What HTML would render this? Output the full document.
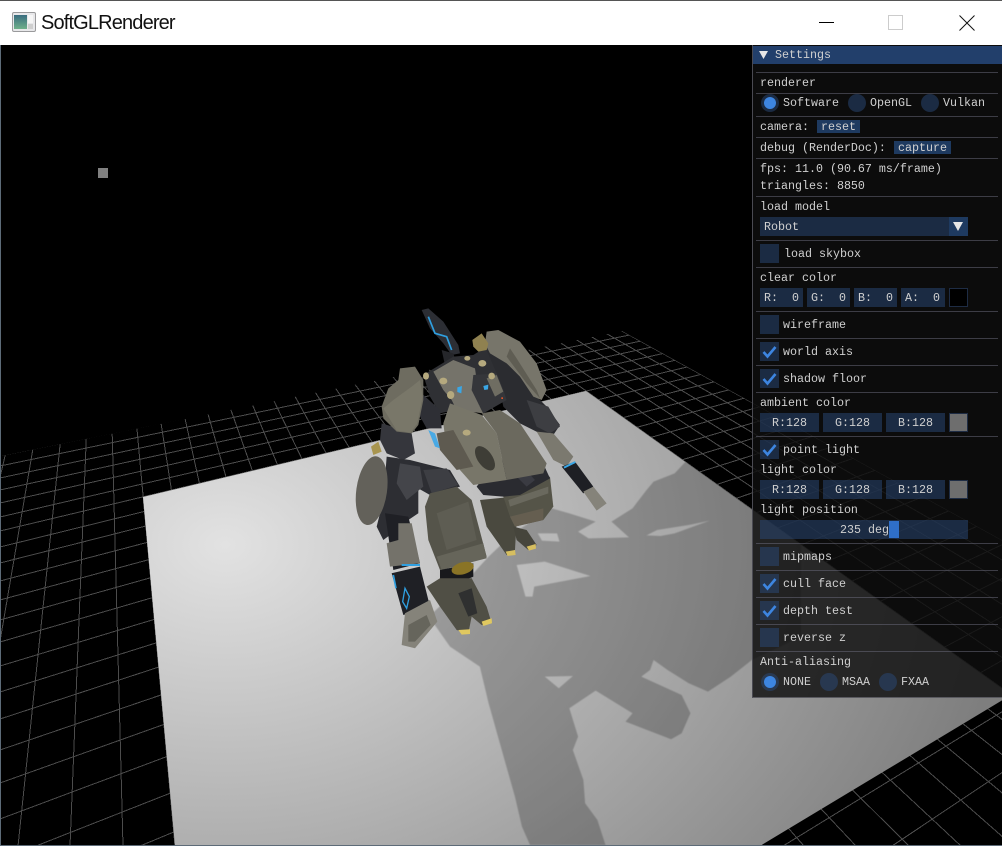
<!DOCTYPE html>
<html><head><meta charset="utf-8"><title>SoftGLRenderer</title>
<style>
html,body{margin:0;padding:0;background:#000;width:1002px;height:846px;overflow:hidden}
#w{position:relative;width:1002px;height:846px;overflow:hidden;background:#000;font-family:"Liberation Mono",monospace}
#tb{position:absolute;left:0;top:0;width:1002px;height:45px;background:#fff;border-top:1px solid #555;box-sizing:border-box}
#title{position:absolute;left:41px;top:12px;font:20px/22px "Liberation Sans",sans-serif;letter-spacing:-.85px;color:#111}
#sc{position:absolute;left:0;top:0;display:block}
#p{position:absolute;left:752px;top:45px;width:250px;height:653px;background:rgba(15,15,15,.82);border-left:1px solid #4a4a52;border-bottom:1px solid #5a5a60;box-sizing:border-box}
.a{position:absolute}
.t{position:absolute;font:11.67px/14px "Liberation Mono",monospace;color:#d0d0d0;white-space:pre}
.s{position:absolute;left:756px;width:242px;height:1px;background:rgba(110,110,128,.5)}
.f{position:absolute;background:rgba(41,74,122,.5)}
.b{position:absolute;background:#1e3a60}
.c{position:absolute;left:760px;width:19px;height:19px;background:rgba(41,74,122,.5)}
.c svg{position:absolute;left:0;top:0}
.r{position:absolute;width:18px;height:18px;border-radius:50%;background:rgba(41,74,122,.5)}
.r i{position:absolute;left:3px;top:3px;width:12px;height:12px;border-radius:50%;background:#3d85e0}
.sw{position:absolute;left:949px;width:19px;height:19px;box-sizing:border-box;border:1px solid #1e2c44}
</style></head><body><div id="w">
<svg id="sc" width="1002" height="846" viewBox="0 0 1002 846" xmlns="http://www.w3.org/2000/svg">
<defs>
<clipPath id="gc"><polygon points="-400,537 622,331 1558,846 -400,846"/></clipPath>
<clipPath id="fc"><polygon points="143,497 586,391 1011,695 760,846 175,846"/></clipPath>
<radialGradient id="fg" gradientUnits="userSpaceOnUse" cx="0" cy="0" r="1" gradientTransform="translate(225 545) scale(787 588)">
<stop offset="0" stop-color="#e2e2e2"/><stop offset="1" stop-color="#7e7e7e"/></radialGradient>
<filter id="bl" x="-10%" y="-10%" width="120%" height="120%"><feGaussianBlur stdDeviation="1.2"/></filter>
</defs>
<rect width="1002" height="846" fill="#000"/>
<rect x="98" y="168" width="10" height="10" fill="#808080"/>
<g clip-path="url(#gc)" stroke="#4c4c4c" stroke-width="1" shape-rendering="crispEdges">
<line x1="102" y1="45" x2="-139" y2="846"/><line x1="102" y1="45" x2="-87" y2="846"/><line x1="102" y1="45" x2="-35" y2="846"/><line x1="102" y1="45" x2="18" y2="846"/><line x1="102" y1="45" x2="70" y2="846"/><line x1="102" y1="45" x2="123" y2="846"/>
<line x1="102" y1="45" x2="175" y2="846"/><line x1="102" y1="45" x2="227" y2="846"/><line x1="102" y1="45" x2="280" y2="846"/><line x1="102" y1="45" x2="332" y2="846"/><line x1="102" y1="45" x2="385" y2="846"/><line x1="102" y1="45" x2="437" y2="846"/><line x1="102" y1="45" x2="489" y2="846"/><line x1="102" y1="45" x2="542" y2="846"/><line x1="102" y1="45" x2="594" y2="846"/><line x1="102" y1="45" x2="647" y2="846"/><line x1="102" y1="45" x2="699" y2="846"/><line x1="102" y1="45" x2="751" y2="846"/><line x1="102" y1="45" x2="804" y2="846"/><line x1="102" y1="45" x2="856" y2="846"/><line x1="102" y1="45" x2="909" y2="846"/><line x1="102" y1="45" x2="961" y2="846"/><line x1="102" y1="45" x2="1013" y2="846"/><line x1="102" y1="45" x2="1066" y2="846"/><line x1="102" y1="45" x2="1118" y2="846"/><line x1="102" y1="45" x2="1171" y2="846"/><line x1="102" y1="45" x2="1223" y2="846"/><line x1="102" y1="45" x2="1279" y2="846"/><line x1="102" y1="45" x2="1335" y2="846"/><line x1="102" y1="45" x2="1391" y2="846"/><line x1="102" y1="45" x2="1446" y2="846"/><line x1="102" y1="45" x2="1502" y2="846"/><line x1="102" y1="45" x2="1558" y2="846"/>
<line x1="0" y1="456" x2="2124" y2="24"/><line x1="0" y1="466" x2="2124" y2="24"/><line x1="0" y1="478" x2="2124" y2="24"/><line x1="0" y1="490" x2="2124" y2="24"/><line x1="0" y1="503" x2="2124" y2="24"/><line x1="0" y1="517" x2="2124" y2="24"/><line x1="0" y1="531" x2="2124" y2="24"/><line x1="0" y1="547" x2="2124" y2="24"/><line x1="0" y1="563" x2="2124" y2="24"/><line x1="0" y1="581" x2="2124" y2="24"/><line x1="0" y1="600" x2="2124" y2="24"/><line x1="0" y1="620" x2="2124" y2="24"/><line x1="0" y1="642" x2="2124" y2="24"/><line x1="0" y1="666" x2="2124" y2="24"/><line x1="0" y1="692" x2="2124" y2="24"/><line x1="0" y1="719" x2="2124" y2="24"/><line x1="0" y1="750" x2="2124" y2="24"/><line x1="0" y1="783" x2="2124" y2="24"/><line x1="0" y1="819" x2="2124" y2="24"/>
<line x1="36" y1="846" x2="2124" y2="24"/><line x1="140" y1="846" x2="2124" y2="24"/><line x1="247" y1="846" x2="2124" y2="24"/><line x1="353" y1="846" x2="2124" y2="24"/><line x1="461" y1="846" x2="2124" y2="24"/><line x1="568" y1="846" x2="2124" y2="24"/><line x1="675" y1="846" x2="2124" y2="24"/><line x1="783" y1="846" x2="2124" y2="24"/><line x1="892" y1="846" x2="2124" y2="24"/>
</g>
<polygon points="143,497 586,391 1011,695 760,846 175,846" fill="url(#fg)"/>
<g clip-path="url(#fc)"><g transform="translate(450 450) scale(.351 .3333)">
<path filter="url(#bl)" fill="#000" fill-opacity=".22" fill-rule="evenodd" d="M290,175 L340,190 415,215 365,245 395,265 510,262 460,215 520,175 560,120 580,95 640,70 680,25 640,-20 1000,150 1000,560 860,630 800,680 735,725 680,700 620,660 580,630 570,660 545,680 660,735 685,790 660,850 630,868 500,815 520,790 415,722 340,775 365,860 350,900 380,990 385,1060 420,1110 443,1185 228,1185 205,1130 185,1040 150,910 110,760 85,650 0,590 -60,500 40,400 110,320 180,250 Z M590,240 L680,225 740,212 640,250 600,258 560,256 Z M190,345 L270,335 400,378 240,410 235,440 215,440 Z M270,680 L350,678 310,715 Z M250,250 L305,250 312,275 262,272 Z"/>
</g></g>
<g transform="translate(340 300) scale(.3333)">
<polygon points="245,30 265,25 310,65 355,135 360,160 335,165 310,130 270,85" fill="#2c2e34"/>
<polyline points="265,50 285,100 320,110 335,150" fill="none" stroke="#2f9fe0" stroke-width="5"/>
<polygon points="305,150 340,160 350,195 315,195" fill="#25262a"/>
<polygon points="250,225 340,170 400,165 440,140 510,220 470,300 300,340 270,290" fill="#2f3034"/>
<polygon points="470,220 440,150 500,170 570,270 620,320 660,375 640,405 600,400 540,370 490,320" fill="#2b2c30"/>
<polygon points="440,95 475,90 540,125 590,190 620,270 605,300 580,290 540,230 500,190 450,160 435,130" fill="#77756a"/>
<polygon points="510,145 530,175 590,270 600,295 560,250 500,170" fill="#5f5d53"/>
<polygon points="397,120 425,100 445,130 440,150 415,155 400,140" fill="#8f8150"/>
<polygon points="560,300 625,320 660,380 630,400 590,380" fill="#3d3e42"/>
<polygon points="590,395 640,400 700,470 680,500 640,480" fill="#7b796f"/>
<polygon points="665,500 705,485 760,560 730,580" fill="#1e1f24"/>
<polyline points="672,503 706,486" fill="none" stroke="#3aa7e6" stroke-width="6"/>
<polygon points="730,575 760,560 800,610 770,632" fill="#85837a"/>
<polygon points="125,370 175,385 215,400 225,460 190,480 140,460 120,420" fill="#35363c"/>
<polygon points="245,280 300,330 305,385 260,385 235,340" fill="#2e2f35"/>
<polygon points="180,205 225,200 250,240 250,300 235,375 215,400 170,395 130,355 125,320 145,265 175,240" fill="#6e6c60"/>
<polygon points="130,325 160,300 215,260 240,240 248,290 232,370 212,398 170,392" fill="#797769"/>
<polygon points="420,600 520,590 530,660 525,750 500,765 440,680" fill="#4a493f"/>
<polygon points="520,680 560,690 590,735 565,750 530,720" fill="#46453c"/>
<polygon points="497,755 525,750 527,765 503,768" fill="#d6be60"/>
<polygon points="560,740 587,732 588,746 567,752" fill="#d6be60"/>
<polygon points="490,590 630,530 640,620 610,660 525,680 510,650" fill="#555448"/>
<polygon points="505,600 625,560 625,580 510,620" fill="#6a695e"/>
<polygon points="510,650 610,625 610,660 525,680" fill="#655e50"/>
<polygon points="470,480 600,470 630,535 540,585 490,590 430,585 410,560" fill="#2a2b30"/>
<polygon points="500,500 530,480 585,540 560,560" fill="#3a3b42"/>
<polygon points="140,470 210,480 250,490 330,510 360,560 270,585 235,565 235,640 205,660 170,690 130,720 110,680 130,600" fill="#2d2e33"/>
<polygon points="180,490 240,500 250,560 200,600 170,550" fill="#44454a"/>
<polygon points="250,510 320,505 355,555 275,580" fill="#3d3e43"/>
<ellipse cx="95" cy="572" rx="46" ry="104" transform="rotate(8 95 572)" fill="#63615a"/>
<polygon points="93,440 115,425 125,455 100,465" fill="#a8954f"/>
<polygon points="135,640 205,650 240,790 160,810" fill="#1f2025"/>
<polygon points="175,670 215,670 240,790 150,800 140,730 175,720" fill="#74726a"/>
<polyline points="185,795 240,795" fill="none" stroke="#2f9fe0" stroke-width="6"/>
<polygon points="155,820 240,800 270,920 190,945" fill="#1f2025"/>
<polyline points="160,825 168,865" fill="none" stroke="#2f9fe0" stroke-width="5"/>
<polygon points="195,865 188,905 200,925 208,890" fill="none" stroke="#2f9fe0" stroke-width="4"/>
<polygon points="195,940 270,900 292,965 225,1045 185,1035" fill="#85837a"/>
<polygon points="205,975 260,945 272,975 225,1025 205,1025" fill="#66655c"/>
<polygon points="255,620 270,580 350,560 395,600 440,770 300,810 265,720" fill="#55544a"/>
<polygon points="290,640 385,605 410,720 320,750" fill="#5e5d53"/>
<polygon points="290,770 430,730 440,775 305,810" fill="#66655a"/>
<polygon points="300,810 400,790 400,830 330,860 300,850" fill="#18191c"/>
<ellipse cx="368" cy="805" rx="34" ry="18" transform="rotate(-15 368 805)" fill="#8a7426"/>
<polygon points="260,860 300,835 395,835 440,920 455,970 425,975 395,950 385,1000 350,990 300,920" fill="#504f45"/>
<polygon points="355,880 395,865 412,940 385,950" fill="#2f3030"/>
<polygon points="355,990 390,988 390,1002 365,1004" fill="#e0c860"/>
<polygon points="425,965 455,955 456,970 430,978" fill="#e0c860"/>
<polygon points="280,215 340,180 405,205 410,240 395,270 430,340 350,330 335,300 310,270" fill="#75736a"/>
<polygon points="330,310 425,345 470,400 500,540 400,555 360,510 320,450 310,370" fill="#787669"/>
<polygon points="425,340 480,330 540,370 620,490 610,520 500,540 470,400" fill="#6b695e"/>
<polygon points="400,225 470,220 490,270 500,300 430,340 395,270" fill="#35363a"/>
<polygon points="440,235 470,225 490,275 465,290" fill="#6f6d62"/>
<polygon points="290,400 340,390 400,500 350,510 300,450" fill="#5e5a50"/>
<ellipse cx="435" cy="475" rx="22" ry="42" transform="rotate(-35 435 475)" fill="#3e3d36"/>
<polygon points="265,390 285,400 300,445 285,440" fill="#49a9e4"/>
<polygon points="352,262 366,258 364,280 352,276" fill="#3aa7e6"/>
<polygon points="430,258 445,254 444,268 433,270" fill="#3aa7e6"/>
<g fill="#b5a97e"><ellipse cx="310" cy="243" rx="12" ry="10"/><ellipse cx="332" cy="285" rx="11" ry="12"/><ellipse cx="258" cy="228" rx="9" ry="11"/><ellipse cx="380" cy="398" rx="12" ry="9"/><ellipse cx="427" cy="190" rx="12" ry="10"/><ellipse cx="455" cy="228" rx="10" ry="10"/><ellipse cx="382" cy="175" rx="9" ry="7"/></g>
<rect x="484" y="292" width="5" height="5" fill="#e0552a"/>
</g>
</svg>

<div id="tb"></div>
<svg class="a" style="left:12px;top:12px" width="24" height="20"><rect x=".5" y=".5" width="23" height="19" rx="1.5" fill="#e8e8ea" stroke="#9a9a9c"/><defs><linearGradient id="ic" x1="0" y1="0" x2="0" y2="1"><stop offset="0" stop-color="#3a6d80"/><stop offset="1" stop-color="#6fb08a"/></linearGradient></defs><rect x="2" y="3" width="13" height="14" fill="url(#ic)"/><rect x="16" y="3" width="5" height="8" fill="#f6f6f6"/><rect x="16" y="12" width="5" height="5" fill="#cfcfcf"/></svg>
<div id="title">SoftGLRenderer</div>
<svg class="a" style="left:810px;top:10px" width="180" height="26"><line x1="9" y1="12.5" x2="24" y2="12.5" stroke="#000"/><rect x="78.5" y="5.5" width="14" height="14" fill="none" stroke="#ccc"/><path d="M149.5 5.5 L164.5 20.5 M164.5 5.5 L149.5 20.5" stroke="#111" fill="none"/></svg>

<div id="p"></div>
<div class="a" style="left:753px;top:46px;width:249px;height:18px;background:#223f6b"></div>
<svg class="a" style="left:759px;top:50px" width="10" height="10"><polygon points="0,1 9,1 4.5,9" fill="#e6e6e6"/></svg>
<div class="t" style="left:775px;top:48px">Settings</div>

<div class="s" style="top:72px"></div>
<div class="t" style="left:760px;top:76px">renderer</div>
<div class="s" style="top:93px"></div>
<div class="r" style="left:761px;top:94px"><i></i></div><div class="t" style="left:783px;top:96px">Software</div>
<div class="r" style="left:848px;top:94px"></div><div class="t" style="left:870px;top:96px">OpenGL</div>
<div class="r" style="left:921px;top:94px"></div><div class="t" style="left:943px;top:96px">Vulkan</div>
<div class="s" style="top:116px"></div>
<div class="t" style="left:760px;top:120px">camera:</div>
<div class="b" style="left:817px;top:120px;width:43px;height:13px"></div><div class="t" style="left:821px;top:120px">reset</div>
<div class="s" style="top:137px"></div>
<div class="t" style="left:760px;top:141px">debug (RenderDoc):</div>
<div class="b" style="left:894px;top:141px;width:57px;height:13px"></div><div class="t" style="left:898px;top:141px">capture</div>
<div class="s" style="top:158px"></div>
<div class="t" style="left:760px;top:162px">fps: 11.0 (90.67 ms/frame)</div>
<div class="t" style="left:760px;top:179px">triangles: 8850</div>
<div class="s" style="top:196px"></div>
<div class="t" style="left:760px;top:200px">load model</div>
<div class="f" style="left:760px;top:217px;width:189px;height:19px"></div>
<div class="b" style="left:949px;top:217px;width:19px;height:19px"></div>
<svg class="a" style="left:953px;top:222px" width="11" height="10"><polygon points="0,0 10,0 5,9" fill="#e6e6e6"/></svg>
<div class="t" style="left:764px;top:220px">Robot</div>
<div class="s" style="top:240px"></div>
<div class="c" style="top:244px"></div><div class="t" style="left:784px;top:247px">load skybox</div>
<div class="s" style="top:267px"></div>
<div class="t" style="left:760px;top:271px">clear color</div>
<div class="f" style="left:760px;top:288px;width:43px;height:19px"></div><div class="t" style="left:764px;top:291px">R:  0</div>
<div class="f" style="left:807px;top:288px;width:43px;height:19px"></div><div class="t" style="left:811px;top:291px">G:  0</div>
<div class="f" style="left:854px;top:288px;width:43px;height:19px"></div><div class="t" style="left:858px;top:291px">B:  0</div>
<div class="f" style="left:901px;top:288px;width:44px;height:19px"></div><div class="t" style="left:905px;top:291px">A:  0</div>
<div class="sw" style="top:288px;background:#000"></div>
<div class="s" style="top:311px"></div>
<div class="c" style="top:315px"></div><div class="t" style="left:783px;top:318px">wireframe</div>
<div class="s" style="top:338px"></div>
<div class="c" style="top:342px"><svg width="19" height="19"><polyline points="3.5,10 7.5,14.5 15.5,5" fill="none" stroke="#3d85e0" stroke-width="2.6"/></svg></div><div class="t" style="left:783px;top:345px">world axis</div>
<div class="s" style="top:365px"></div>
<div class="c" style="top:369px"><svg width="19" height="19"><polyline points="3.5,10 7.5,14.5 15.5,5" fill="none" stroke="#3d85e0" stroke-width="2.6"/></svg></div><div class="t" style="left:783px;top:372px">shadow floor</div>
<div class="s" style="top:392px"></div>
<div class="t" style="left:760px;top:396px">ambient color</div>
<div class="f" style="left:760px;top:413px;width:59px;height:19px"></div><div class="t" style="left:772px;top:416px">R:128</div>
<div class="f" style="left:823px;top:413px;width:59px;height:19px"></div><div class="t" style="left:835px;top:416px">G:128</div>
<div class="f" style="left:886px;top:413px;width:59px;height:19px"></div><div class="t" style="left:898px;top:416px">B:128</div>
<div class="sw" style="top:413px;background:#6e6e6e"></div>
<div class="s" style="top:436px"></div>
<div class="c" style="top:440px"><svg width="19" height="19"><polyline points="3.5,10 7.5,14.5 15.5,5" fill="none" stroke="#3d85e0" stroke-width="2.6"/></svg></div><div class="t" style="left:783px;top:443px">point light</div>
<div class="t" style="left:760px;top:463px">light color</div>
<div class="f" style="left:760px;top:480px;width:59px;height:19px"></div><div class="t" style="left:772px;top:483px">R:128</div>
<div class="f" style="left:823px;top:480px;width:59px;height:19px"></div><div class="t" style="left:835px;top:483px">G:128</div>
<div class="f" style="left:886px;top:480px;width:59px;height:19px"></div><div class="t" style="left:898px;top:483px">B:128</div>
<div class="sw" style="top:480px;background:#6e6e6e"></div>
<div class="t" style="left:760px;top:503px">light position</div>
<div class="f" style="left:760px;top:520px;width:208px;height:19px"></div>
<div class="a" style="left:889px;top:521px;width:10px;height:17px;background:#2f6fc8"></div>
<div class="t" style="left:840px;top:523px">235 deg</div>
<div class="s" style="top:543px"></div>
<div class="c" style="top:547px"></div><div class="t" style="left:783px;top:550px">mipmaps</div>
<div class="s" style="top:570px"></div>
<div class="c" style="top:574px"><svg width="19" height="19"><polyline points="3.5,10 7.5,14.5 15.5,5" fill="none" stroke="#3d85e0" stroke-width="2.6"/></svg></div><div class="t" style="left:783px;top:577px">cull face</div>
<div class="s" style="top:597px"></div>
<div class="c" style="top:601px"><svg width="19" height="19"><polyline points="3.5,10 7.5,14.5 15.5,5" fill="none" stroke="#3d85e0" stroke-width="2.6"/></svg></div><div class="t" style="left:783px;top:604px">depth test</div>
<div class="s" style="top:624px"></div>
<div class="c" style="top:628px"></div><div class="t" style="left:783px;top:631px">reverse z</div>
<div class="s" style="top:651px"></div>
<div class="t" style="left:760px;top:655px">Anti-aliasing</div>
<div class="r" style="left:761px;top:673px"><i></i></div><div class="t" style="left:783px;top:675px">NONE</div>
<div class="r" style="left:820px;top:673px"></div><div class="t" style="left:842px;top:675px">MSAA</div>
<div class="r" style="left:879px;top:673px"></div><div class="t" style="left:901px;top:675px">FXAA</div>

<div class="a" style="left:0;top:45px;width:1px;height:801px;background:#5d6b78"></div>
<div class="a" style="left:0;top:845px;width:1002px;height:1px;background:#5d6b78"></div>
</div></body></html>
